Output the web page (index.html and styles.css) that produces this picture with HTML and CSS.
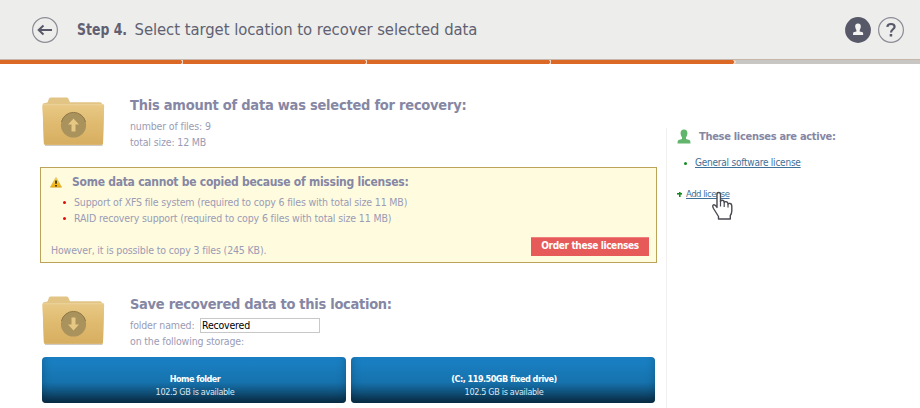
FILE: index.html
```html
<!DOCTYPE html>
<html lang="en">
<head>
<meta charset="utf-8">
<title>Select target location</title>
<link rel="stylesheet" href="styles.css">
</head>
<body>
<svg width="0" height="0" class="defs" aria-hidden="true">
  <defs>
    <linearGradient id="folderFront" x1="0" y1="0" x2="0" y2="1">
      <stop offset="0" stop-color="#e8c986"/><stop offset=".5" stop-color="#dfba6e"/><stop offset="1" stop-color="#d7ae62"/>
    </linearGradient>
    <linearGradient id="warn" x1="0" y1="0" x2="0" y2="1">
      <stop offset="0" stop-color="#ffe45c"/><stop offset="1" stop-color="#f0a800"/>
    </linearGradient>
    <g id="folder">
      <path d="M3 48.300H60.500" stroke="#a9a294" stroke-width="1.400" opacity=".55"/>
      <path d="M.5 8Q.7 6 3 6L5.500 5.500L7 1.600Q7.500.5 9 .5H24.500Q25.800.5 26.300 1.600L28 5.300H58Q60 5.300 60 7Q62.300 7 62.100 9L61 46.500Q60.800 47.800 59.500 47.800H3.500Q2 47.800 1.900 46.500Z" fill="#e2c485"/>
      <path d="M.5 9Q.6 7.300 2.500 7.300H60Q62.200 7.300 62.100 9L61 46.500Q60.800 47.800 59.500 47.800H3.500Q2 47.800 1.900 46.500Z" fill="url(#folderFront)"/>
      <path d="M1.500 7.800H61" stroke="#efd7a2" stroke-width=".8"/>
      <circle cx="31.500" cy="28" r="12.600" fill="#aa925d"/>
      <path d="M19.500 25A12.300 12.300 0 0 1 43.500 25" fill="none" stroke="#8f7846" stroke-width="1"/>
    </g>
  </defs>
</svg>
<header class="header">
  <svg class="back" width="28" height="28" viewBox="0 0 28 28"><circle cx="14" cy="14" r="12.400" fill="none" stroke="#8c8c97" stroke-width="1.200"/><path d="M21 14H8M12.500 9.500L7.700 14L12.500 18.500" fill="none" stroke="#575868" stroke-width="2"/></svg>
  <h1 class="title"><b>Step 4.</b><span>Select target location to recover selected data</span></h1>
  <svg class="user" width="28" height="28" viewBox="0 0 28 28"><circle cx="14" cy="14" r="12.900" fill="#575868"/><path d="M14 7.500C16.300 7.500 17 8.800 16.800 10.700C16.700 12.200 16 13.200 15.700 14V15.500L18.700 16.200Q19.200 16.500 19.200 19H9Q9 16.500 9.500 16.200L12.400 15.500V14C12 13.200 11.300 12.200 11.200 10.700C11 8.800 11.700 7.500 14 7.500Z" fill="#f3f3f2"/></svg>
  <svg class="help" width="28" height="28" viewBox="0 0 28 28"><circle cx="14" cy="14" r="12.400" fill="none" stroke="#8c8c97" stroke-width="1.200"/><path d="M10.300 10.800C10.500 8.800 12 8 14 8C16.200 8 17.600 9.100 17.600 10.800C17.600 13.300 14 13.300 14 16.500" fill="none" stroke="#575868" stroke-width="2.200"/><rect x="12.700" y="18" width="2.500" height="2.500" fill="#575868"/></svg>
</header>
<div class="progress"><i class="done"></i><i class="done"></i><i class="done"></i><i class="done"></i><i></i></div>
<div class="layout">
  <main class="main">
    <section class="block">
      <svg class="folder" width="64" height="50" viewBox="0 0 64 50"><use href="#folder"/><path d="M31.500 21.500L37 27.500H33.500V34.500H29.500V27.500H26Z" fill="#e6c884"/></svg>
      <div class="info">
        <h2 class="amount">This amount of data was selected for recovery:</h2>
        <p>number of files: 9</p>
        <p>total size: 12 MB</p>
      </div>
    </section>
    <section class="notice">
      <div class="notice-head">
        <svg width="12" height="11" viewBox="0 0 12 11"><path d="M6 .5L11.600 10.200H.4Z" fill="url(#warn)" stroke="#d9b146" stroke-width=".7" stroke-linejoin="round"/><path d="M6 3.500V6.800M6 8V9.400" stroke="#28220d" stroke-width="1.600"/></svg>
        <h3>Some data cannot be copied because of missing licenses:</h3>
      </div>
      <ul class="missing">
        <li>Support of XFS file system (required to copy 6 files with total size 11 MB)</li>
        <li>RAID recovery support (required to copy 6 files with total size 11 MB)</li>
      </ul>
      <div class="notice-foot">
        <span>However, it is possible to copy 3 files (245 KB).</span>
        <button class="order" type="button">Order these licenses</button>
      </div>
    </section>
    <section class="block save">
      <svg class="folder" width="64" height="50" viewBox="0 0 64 50"><use href="#folder"/><path d="M31.500 34.500L37 28.500H33.500V21.500H29.500V28.500H26Z" fill="#e6c884"/></svg>
      <div class="info">
        <h2>Save recovered data to this location:</h2>
        <p class="field"><label for="folder-name">folder named:</label><input id="folder-name" type="text" value="Recovered"></p>
        <p>on the following storage:</p>
      </div>
    </section>
    <div class="tiles">
      <div class="tile"><b>Home folder</b><span>102.5 GB is available</span></div>
      <div class="tile"><b>(C:, 119.50GB fixed drive)</b><span>102.5 GB is available</span></div>
    </div>
  </main>
  <aside class="side">
    <div class="side-head">
      <svg width="14" height="15" viewBox="0 0 14 15"><path d="M7 .5C9.600.5 10.600 2.300 10.400 4.600C10.200 6.800 9.400 7.800 9 8.600V10L12.500 11Q13.500 11.400 13.500 14.500H.5Q.5 11.400 1.500 11L5 10V8.600C4.600 7.800 3.800 6.800 3.600 4.600C3.400 2.300 4.400.5 7 .5Z" fill="#62b56c"/></svg>
      <h3>These licenses are active:</h3>
    </div>
    <div class="license"><i class="dot"></i><a href="#">General software license</a></div>
    <div class="add"><i class="plus"></i><a href="#">Add license</a>
      <svg class="cursor" width="24" height="30" viewBox="0 0 24 30"><path d="M6 3.500Q6 1.500 7.700 1.500Q9.500 1.500 9.500 3.500V10.500Q10 9 11.500 9.300Q13.200 9.500 13.200 11.500Q14 10.300 15.500 10.700Q17 11 17 13Q18 12 19.300 12.500Q20.800 13 20.800 15V20Q20.800 22.500 19.300 24.500V28H7.500V25.500L2.500 17.500Q1 14.500 2.500 13.800Q4 13.300 6 16.500Z" fill="#fff" stroke="#484850" stroke-width="1.400" stroke-linejoin="round"/><path d="M9.500 10V15.500M13.200 11.500V16M17 13V16.500" stroke="#484850" stroke-width="1.200"/></svg>
    </div>
  </aside>
</div>
</body>
</html>
```
FILE: styles.css
```css
* { box-sizing: border-box; }
body { margin: 0; width: 920px; height: 408px; overflow: hidden; background: #fff; color: #9a9cb5; font: 10.5px/16px "DejaVu Sans Condensed", "DejaVu Sans", sans-serif; font-stretch: condensed; letter-spacing: -.15px; white-space: nowrap; }
h1, h2, h3, p, ul { margin: 0; padding: 0; }
.defs { position: absolute; }
.header { height: 59px; padding: 0 15px 0 31px; display: flex; align-items: center; background: #ededeb; color: #5f6172; }
.title { display: flex; flex: 1; margin: 1px 0 0 18px; font-size: 16.5px; font-weight: normal; line-height: 24px; letter-spacing: -.05px; }
.title b { width: 57.5px; letter-spacing: 0; transform: scaleX(.84); transform-origin: left; }
.user { margin-right: 5px; }
.progress { height: 5px; display: flex; border-top: 1px solid #c5b5aa; background: #c9c7c3; }
.progress i { position: relative; width: 184px; }
.progress i:first-child { width: 183px; }
.progress .done { background: #dc6826; }
.progress .done::after { content: ""; position: absolute; right: -1px; top: 0; width: 3px; height: 4px; background: #fae9df; clip-path: polygon(0 0, 50% 0, 100% 50%, 50% 100%, 0 100%, 50% 50%); }
.layout { display: flex; }
.main { width: 657px; padding: 31px 0 0 40px; }
.block { display: flex; padding-left: 2px; }
.folder { margin: 2px 24px 0 0; }
.info h2 { margin-bottom: 3px; font-size: 14.5px; line-height: 20px; letter-spacing: -.29px; color: #8587a4; }
.info .amount { letter-spacing: -.24px; }
.notice { height: 96px; margin-top: 17px; padding: 4px 7px 0 10px; border: 1px solid #bba45a; background: #fffbdf; }
.notice-head { display: flex; align-items: center; gap: 9px; height: 20px; }
.notice-head svg { position: relative; left: -1px; }
h3 { font-size: 12px; line-height: 20px; letter-spacing: -.26px; color: #8587a4; }
.missing { list-style: none; margin-top: 2px; letter-spacing: -.165px; }
.missing li { position: relative; padding-left: 23px; }
.missing li + li { letter-spacing: -.14px; }
.missing li::before { content: ""; position: absolute; left: 11.5px; top: 6.5px; width: 3.5px; height: 3.5px; border-radius: 50%; background: #e30d0d; }
.notice-foot { display: flex; justify-content: space-between; align-items: flex-end; margin-top: 11px; height: 19px; }
.notice-foot > span { position: relative; top: 2px; }
.order { width: 118px; height: 19px; padding: 0 0 2px; border: 0; border-top: 1px solid #ef8080; background: #e65a5a; color: #fff; font: bold 10px/16px "DejaVu Sans Condensed", sans-serif; letter-spacing: -.35px; }
.save { margin-top: 31px; }
.field { display: flex; align-items: center; }
.field label { width: 65px; }
.field input { width: 120px; height: 15px; margin-left: 5px; padding: 0 1px; border: 1px solid #c8c8c8; color: #000; background: #fff; font: 10.5px/13px "DejaVu Sans Condensed", sans-serif; letter-spacing: -.2px; }
.tiles { display: flex; gap: 5px; padding-left: 2px; margin-top: 8px; }
.tile { width: 304px; height: 46px; padding: 16px 0 0 2px; display: flex; flex-direction: column; align-items: center; border-radius: 4px; background: linear-gradient(#1a82c6, #1672ad 55%, #104f78 80%, #0b304a); box-shadow: inset 0 -6px 14px -6px #07263c; color: #dbe9f3; font-size: 9px; line-height: 13px; letter-spacing: -.33px; }
.tile b { color: #fff; letter-spacing: -.5px; }
.side { position: relative; margin: 64px 0 0 9px; padding-left: 11px; width: 254px; height: 290px; border-left: 1px solid #f0f0f0; }
.side-head { display: flex; align-items: center; gap: 8px; height: 20px; margin: -2px 0 0 -1px; }
.side-head h3 { padding-top: 1px; font-size: 11px; letter-spacing: -.3px; }
.license { display: flex; align-items: center; gap: 8px; height: 16px; margin-top: 9px; padding-left: 6px; font-size: 10px; letter-spacing: -.23px; }
.dot { width: 3px; height: 3px; border-radius: 50%; background: #128c20; }
.add { position: relative; display: flex; align-items: center; gap: 4px; height: 16px; margin: 15px 0 0 -1px; font-size: 9.5px; letter-spacing: -.5px; }
.plus { width: 5px; height: 5px; background: linear-gradient(#128c20, #128c20) center/5px 1.6px no-repeat, linear-gradient(#128c20, #128c20) center/1.6px 5px no-repeat; }
a { color: #3f7098; line-height: 14px; text-decoration: underline; }
.cursor { position: absolute; left: 34px; top: 5px; }
```
